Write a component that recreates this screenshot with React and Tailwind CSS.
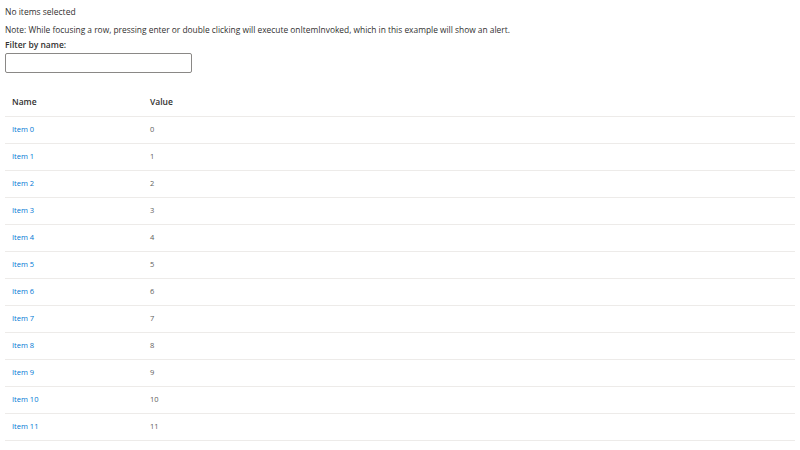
import React from "react";

const items = Array.from({ length: 13 }, (_, i) => ({ name: `Item ${i}`, value: i }));

export default function App() {
	return (
		<div className="w-[800px] h-[450px] overflow-hidden bg-white px-[5px] font-['Open_Sans',sans-serif] text-[#323130]">
			<div className="pt-[5px] text-[8.5px] leading-[13px]">No items selected</div>
			<div className="mt-[5px] text-[8.4px] leading-[13px]">
				Note: While focusing a row, pressing enter or double clicking will execute onItemInvoked, which in this example will show an alert.
			</div>
			<label className="block mt-[1px] text-[8.5px] leading-[15px] font-semibold">Filter by name:</label>
			<input
				type="text"
				className="mt-[1px] block w-[187px] h-[20px] border border-[#8a8886] rounded-[2px] outline-none"
			/>
			<div className="mt-[15px]">
				<div className="flex h-[29px] items-center border-b border-[#edebe9] text-[8.5px] font-semibold">
					<span className="w-[145px] pl-[7px]">Name</span>
					<span>Value</span>
				</div>
				{items.map((item) => (
					<div
						key={item.name}
						className="flex h-[27px] items-center border-b border-[#edebe9] text-[7.5px]"
					>
						<span className="w-[145px] pl-[7px] text-[#0078d4]">{item.name}</span>
						<span className="text-[#605e5c]">{item.value}</span>
					</div>
				))}
			</div>
		</div>
	);
}
